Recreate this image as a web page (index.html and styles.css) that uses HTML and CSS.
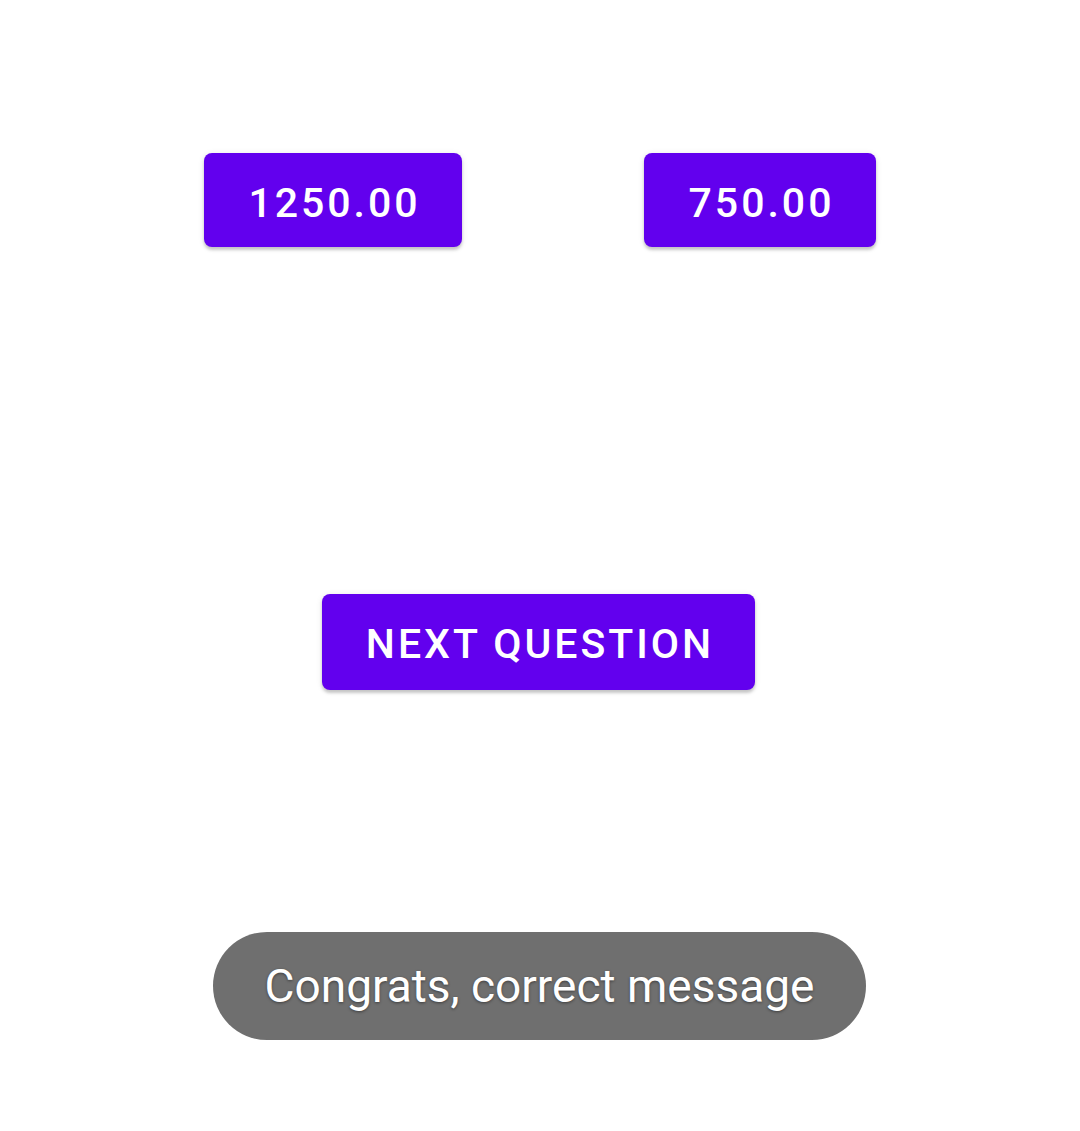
FILE: index.html
```html
<!DOCTYPE html>
<html>
<head>
<meta charset="utf-8">
<link rel="stylesheet" href="styles.css">
</head>
<body>
<div class="screen">
  <div class="answers">
    <button class="btn btn-a">1250.00</button>
    <button class="btn btn-b">750.00</button>
  </div>
  <div class="next-row">
    <button class="btn btn-next">NEXT QUESTION</button>
  </div>
  <div class="toast-row">
    <div class="toast">Congrats, correct message</div>
  </div>
</div>
</body>
</html>
```

FILE: styles.css
```css
html, body {
  margin: 0;
  padding: 0;
  background: #ffffff;
}
.screen {
  width: 1080px;
  height: 1131px;
  display: flex;
  flex-direction: column;
  font-family: Roboto, "Noto Sans", sans-serif;
}
.answers {
  display: flex;
  padding-top: 153px;
  padding-left: 204px;
  gap: 182px;
}
.btn {
  background: #6200ee;
  color: #ffffff;
  border: none;
  border-radius: 8px;
  font-family: Roboto, sans-serif;
  font-weight: 500;
  font-size: 41px;
  letter-spacing: 3px;
  height: 94px;
  padding: 5px 0 0 3px;
  box-shadow: 0 3px 3px rgba(0,0,0,0.18), 0 1px 6px rgba(0,0,0,0.10);
  display: flex;
  align-items: center;
  justify-content: center;
}
.btn-a { width: 258px; }
.btn-b { width: 232px; }
.next-row {
  display: flex;
  padding-top: 347px;
  padding-left: 322px;
}
.btn-next {
  width: 433px;
  height: 96px;
  padding-top: 4px;
}
.toast-row {
  display: flex;
  padding-top: 242px;
  padding-left: 213px;
}
.toast {
  width: 653px;
  height: 108px;
  border-radius: 54px;
  background: #6f6f6f;
  color: #ffffff;
  font-family: Roboto, sans-serif;
  font-size: 46px;
  display: flex;
  align-items: center;
  justify-content: center;
  text-shadow: 0 1px 3px rgba(0,0,0,0.45);
}
```
